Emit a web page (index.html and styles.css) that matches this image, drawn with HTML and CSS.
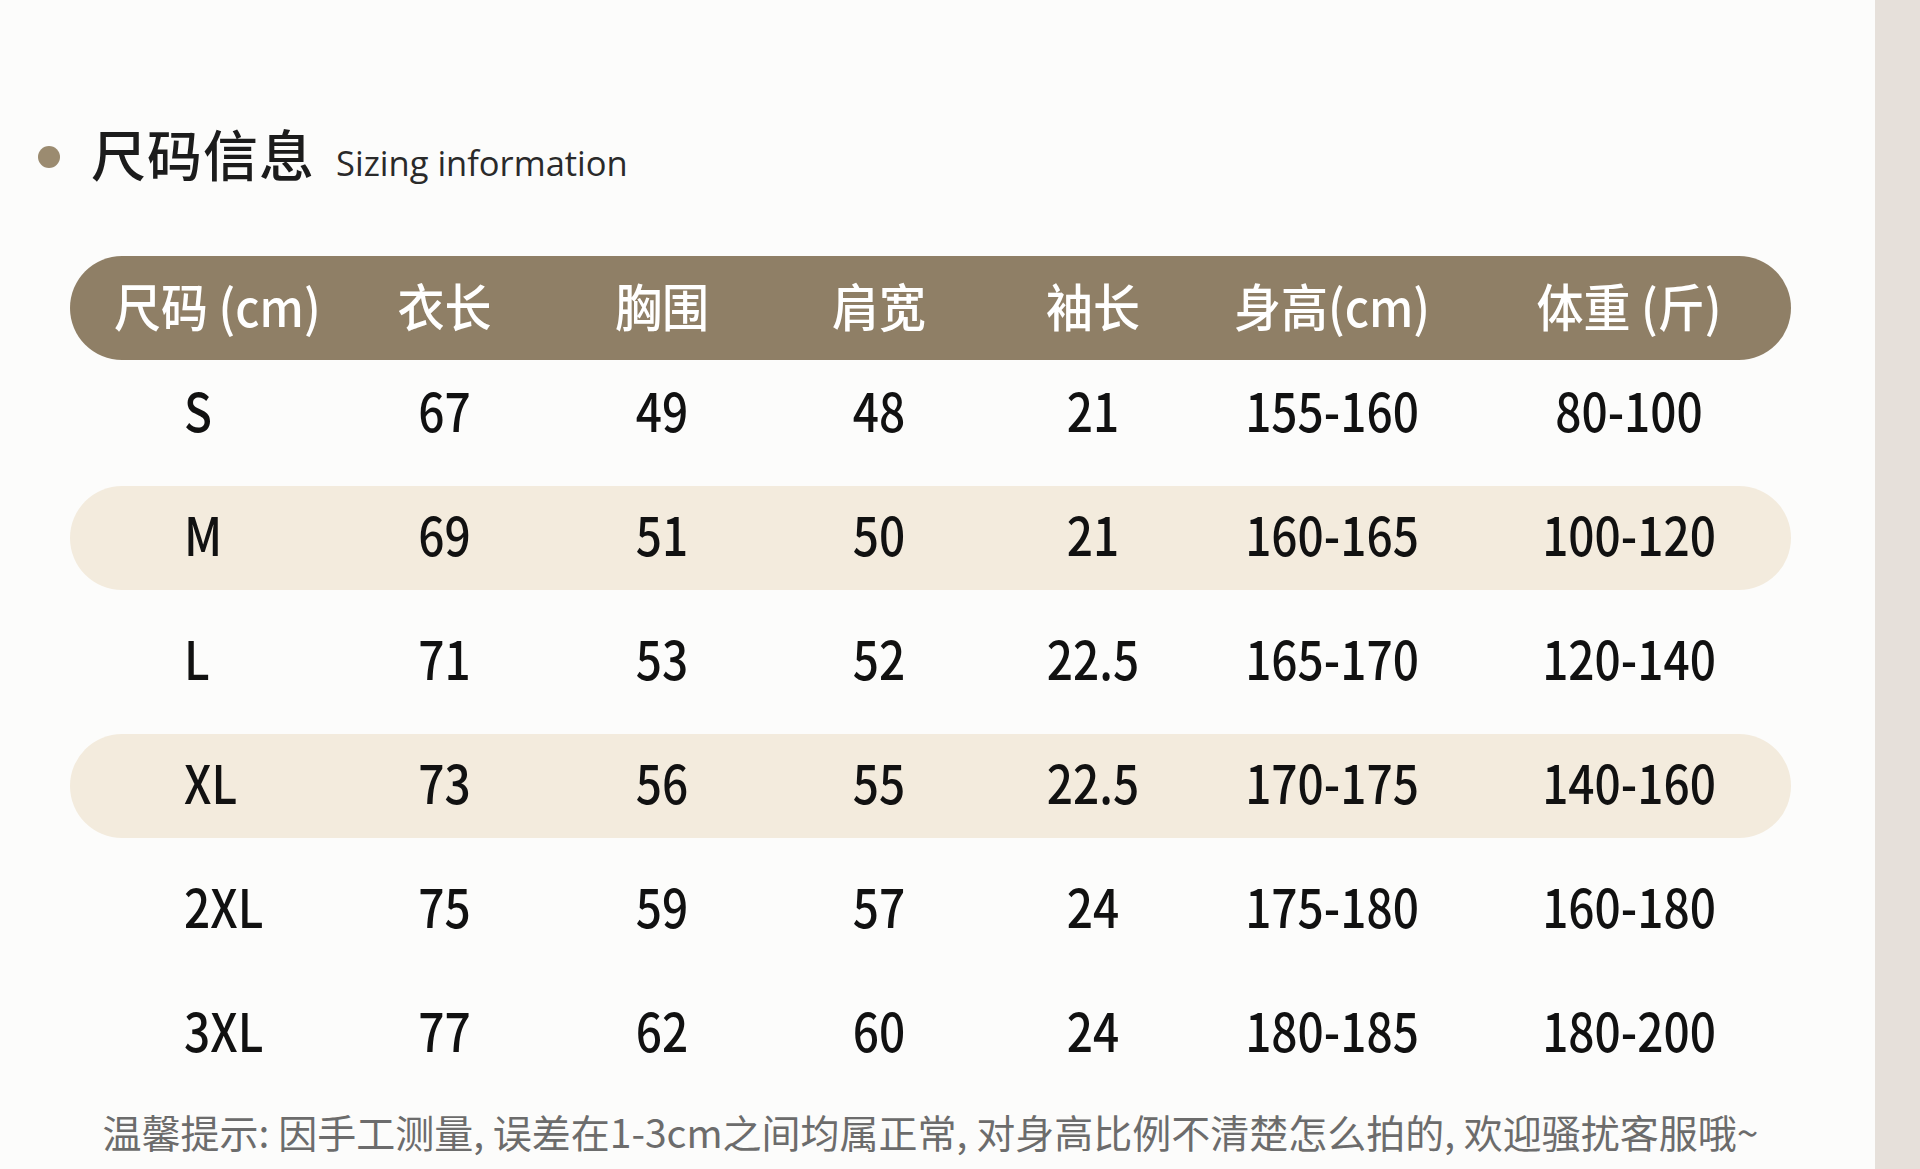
FILE: index.html
```html
<!DOCTYPE html>
<html lang="zh-CN">
<head>
<meta charset="utf-8">
<title>尺码信息</title>
<link rel="stylesheet" href="styles.css">
</head>
<body>
<div class="page">
  <main class="main">
    <div class="title-row">
      <span class="dot"></span>
      <h1 class="title">尺码信息<span class="sub">Sizing information</span></h1>
    </div>
    <div class="table">
      <div class="row head">
        <div class="cell first">尺码 (cm)</div>
        <div class="cell">衣长</div>
        <div class="cell">胸围</div>
        <div class="cell">肩宽</div>
        <div class="cell">袖长</div>
        <div class="cell">身高(cm)</div>
        <div class="cell">体重 (斤)</div>
      </div>
      <div class="rows">
        <div class="row">
          <div class="cell first">S</div><div class="cell">67</div><div class="cell">49</div><div class="cell">48</div><div class="cell">21</div><div class="cell">155-160</div><div class="cell">80-100</div>
        </div>
        <div class="row band">
          <div class="cell first">M</div><div class="cell">69</div><div class="cell">51</div><div class="cell">50</div><div class="cell">21</div><div class="cell">160-165</div><div class="cell">100-120</div>
        </div>
        <div class="row">
          <div class="cell first">L</div><div class="cell">71</div><div class="cell">53</div><div class="cell">52</div><div class="cell">22.5</div><div class="cell">165-170</div><div class="cell">120-140</div>
        </div>
        <div class="row band">
          <div class="cell first">XL</div><div class="cell">73</div><div class="cell">56</div><div class="cell">55</div><div class="cell">22.5</div><div class="cell">170-175</div><div class="cell">140-160</div>
        </div>
        <div class="row">
          <div class="cell first">2XL</div><div class="cell">75</div><div class="cell">59</div><div class="cell">57</div><div class="cell">24</div><div class="cell">175-180</div><div class="cell">160-180</div>
        </div>
        <div class="row">
          <div class="cell first">3XL</div><div class="cell">77</div><div class="cell">62</div><div class="cell">60</div><div class="cell">24</div><div class="cell">180-185</div><div class="cell">180-200</div>
        </div>
      </div>
      <p class="note">温馨提示: 因手工测量, 误差在1-3cm之间均属正常, 对身高比例不清楚怎么拍的, 欢迎骚扰客服哦~</p>
    </div>
  </main>
  <aside class="strip"></aside>
</div>
</body>
</html>
```

FILE: styles.css
```css
html, body {
  margin: 0;
  padding: 0;
}
body {
  width: 1920px;
  height: 1169px;
  overflow: hidden;
  font-family: "Noto Sans CJK SC", "Noto Sans", sans-serif;
  background: #fcfcfb;
}
.page {
  display: flex;
  height: 1169px;
}
.main {
  flex: 1;
  background: #fcfcfb;
  padding-top: 125px;
}
.strip {
  width: 45px;
  background: #e6e0da;
}
.title-row {
  display: flex;
  align-items: center;
  height: 64px;
  margin-left: 38px;
}
.dot {
  width: 22px;
  height: 22px;
  border-radius: 50%;
  background: #9b8b70;
  margin-right: 31px;
  flex: none;
}
.title {
  margin: 0;
  font-size: 55px;
  line-height: 64px;
  font-weight: 500;
  color: #1c1c1c;
  letter-spacing: 1px;
}
.sub {
  font-family: "Open Sans", "Noto Sans", sans-serif;
  font-size: 34.5px;
  font-weight: 400;
  color: #2a2a2a;
  margin-left: 21px;
  letter-spacing: 0;
}
.table {
  margin-top: 67px;
  margin-left: 70px;
  width: 1721px;
}
.row {
  display: grid;
  grid-template-columns: 264px 221px 214px 220px 208px 270px 324px;
  align-items: center;
  height: 104px;
  border-radius: 52px;
  color: #111111;
  font-size: 46px;
  font-weight: 500;
}
.rows {
  margin-top: 2px;
  display: flex;
  flex-direction: column;
  gap: 20px;
}
.head {
  background: #8f7f66;
  color: #ffffff;
  font-size: 47px;
  font-weight: 500;
}
.band {
  background: #f3ebdd;
}
.cell {
  text-align: center;
  line-height: 1;
  transform: translateY(-5px) scaleY(1.16);
}
.head .cell {
  transform: translateY(-4px) scaleY(1.08);
}
.cell.first {
  text-align: left;
  padding-left: 114px;
}
.head .cell.first {
  padding-left: 44px;
}
.note {
  margin: 21px 0 0;
  text-align: center;
  font-size: 39px;
  line-height: 48px;
  color: #6c6c6c;
  white-space: nowrap;
}
```
